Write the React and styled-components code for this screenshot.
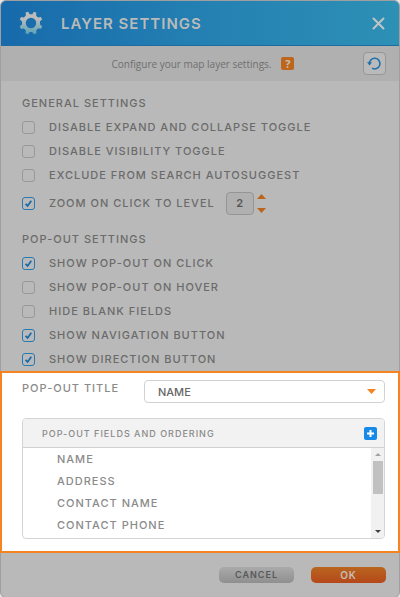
import React, { useState } from 'react'
import styled, { createGlobalStyle } from 'styled-components'

const GlobalStyle = createGlobalStyle`
    * {
        box-sizing: border-box;
    }
    body {
        margin: 0;
        background: #e4e4e4;
        font-family: Inter, "Open Sans", sans-serif;
        font-size: 11px;
        color: #6b6b6b;
    }
    button, input, select {
        font-family: inherit;
        color: inherit;
    }
    h1, h2, p, ul {
        margin: 0;
        padding: 0;
    }
`

const Dialog = styled.main`
    border: 1px solid #9f9f9f;
    border-radius: 6px;
    background: #b9b9b9;
    letter-spacing: 1px;
`
const Header = styled.header`
    display: flex;
    align-items: center;
    height: 45px;
    padding: 0 14px 0 18px;
    border-bottom: 1px solid #1c6c9f;
    border-radius: 5px 5px 0 0;
    background: linear-gradient(90deg, #176aab, #2480b2 50%, #2d90b5);
`
const Title = styled.h1`
    flex: 1;
    margin-left: 18px;
    font-size: 15px;
    font-weight: 600;
    color: #bababa;
`
const CloseButton = styled.button`
    display: flex;
    padding: 0;
    border: 0;
    background: none;
    cursor: pointer;
`
const InfoBar = styled.div`
    display: grid;
    grid-template-columns: 1fr auto 1fr;
    align-items: center;
    height: 35px;
    padding: 0 13px;
    background: #b0b0b0;
`
const InfoText = styled.p`
    grid-column: 2;
    display: flex;
    align-items: center;
    gap: 10px;
    padding-left: 6px;
    font-family: "Open Sans", sans-serif;
    font-size: 10px;
    letter-spacing: normal;
    color: #6f6f6f;
`
const HelpButton = styled.button`
    width: 13px;
    height: 13px;
    padding: 0;
    border: 0;
    border-radius: 2px;
    font-size: 11px;
    font-weight: 700;
    line-height: 13px;
    color: #c9c0b8;
    background: #bd661c;
    cursor: pointer;
`
const ResetButton = styled.button`
    justify-self: end;
    display: flex;
    align-items: center;
    justify-content: center;
    width: 23px;
    height: 23px;
    padding: 0;
    border: 1px solid #969696;
    border-radius: 4px;
    background: #bababa;
    cursor: pointer;
`
const Settings = styled.div`
    display: flex;
    flex-direction: column;
    gap: 8px;
    padding: 10px 14px 0 21px;
`
const SectionTitle = styled.h2`
    font-size: 11px;
    font-weight: 500;
    line-height: 24px;
`
const OptionRow = styled.div`
    display: flex;
    align-items: center;
    height: ${props => props.$tall ? '32px' : '24px'};
`
const OptionLabel = styled.label`
    display: flex;
    align-items: center;
    gap: 14px;
    font-weight: 500;
`
const Checkbox = styled.input`
    appearance: none;
    width: 13px;
    height: 13px;
    margin: 0;
    border: 1px solid #989898;
    border-radius: 3px;
    background: #b9b9b9;

    &:checked {
        border-color: #2779b0;
        background: url("data:image/svg+xml,%3Csvg xmlns='http://www.w3.org/2000/svg' viewBox='0 0 11 11'%3E%3Cpath d='M2.6 5.8 4.6 7.9 8.3 2.8' fill='none' stroke='%231469a8' stroke-width='1.7'/%3E%3C/svg%3E");
    }
`
const LevelInput = styled.input`
    width: 28px;
    height: 23px;
    margin-left: 11px;
    padding: 0;
    border: 1px solid #959595;
    border-radius: 4px;
    font-size: 11px;
    font-weight: 600;
    text-align: center;
    color: #555;
    background: #b0b0b0;
`
const Stepper = styled.div`
    display: flex;
    flex-direction: column;
    gap: 9px;
    margin-left: 3px;
`
const StepButton = styled.button`
    display: flex;
    padding: 0;
    border: 0;
    background: none;
    cursor: pointer;
`
const Highlight = styled.section`
    margin: 0 -1px;
    padding: 7px 13px 12px 20px;
    border: 2px solid #f5841f;
    color: #8a8a8a;
    background: #fff;
`
const FieldRow = styled.div`
    display: grid;
    grid-template-columns: 114px 1fr;
    column-gap: 8px;
    margin-bottom: 15px;
`
const FieldLabel = styled.label`
    font-weight: 500;
    line-height: 17px;
`
const SelectBox = styled.div`
    display: grid;
    align-items: center;

    > * {
        grid-area: 1 / 1;
    }
    > svg {
        justify-self: end;
        margin-right: 9px;
        pointer-events: none;
    }
`
const Select = styled.select`
    appearance: none;
    width: 100%;
    height: 23px;
    padding: 0 24px 0 13px;
    border: 1px solid #d2d2d2;
    border-radius: 4px;
    font-size: 11px;
    font-weight: 500;
    color: #666;
    background: #fff;
`
const FieldPanel = styled.div`
    overflow: hidden;
    border: 1px solid #d4d4d4;
    border-radius: 4px;
`
const PanelHeader = styled.div`
    display: flex;
    align-items: center;
    justify-content: space-between;
    height: 29px;
    padding: 0 7px 0 19px;
    border-bottom: 1px solid #d0d0d0;
    background: #f2f2f2;
`
const PanelTitle = styled.h2`
    font-size: 9px;
    font-weight: 500;
`
const AddButton = styled.button`
    display: flex;
    align-items: center;
    justify-content: center;
    width: 13px;
    height: 13px;
    padding: 0;
    border: 0;
    border-radius: 2px;
    background: #168ae6;
    cursor: pointer;
`
const PanelBody = styled.div`
    display: flex;
`
const FieldList = styled.ul`
    flex: 1;
    padding: 0 0 2px 34px;
    list-style: none;
`
const FieldItem = styled.li`
    height: 22px;
    font-weight: 500;
    line-height: 22px;
`
const ScrollTrack = styled.div`
    display: flex;
    flex-direction: column;
    align-items: center;
    width: 13px;
    padding: 5px 0;
    background: #f1f1f1;
`
const ScrollThumb = styled.div`
    width: 10px;
    height: 33px;
    margin: 5px 0 auto;
    background: #c1c1c1;
`
const Footer = styled.footer`
    display: flex;
    justify-content: flex-end;
    gap: 17px;
    padding: 14px 13px;
`
const FooterButton = styled.button`
    width: 75px;
    height: 16px;
    padding: 0;
    border: 0;
    border-radius: 5px;
    font-size: ${props => props.$primary ? '10px' : '9px'};
    font-weight: 600;
    line-height: 16px;
    letter-spacing: 1px;
    color: ${props => props.$primary ? '#c8bdb4' : '#595959'};
    background: ${props => props.$primary
        ? 'linear-gradient(#b9651f, #b5481a)'
        : 'linear-gradient(#aaa, #8f8f8f)'};
    cursor: pointer;
`

const Triangle = ({ color, up, width = 9, height = 5 }) => (
    <svg width={width} height={height} viewBox="0 0 8 4" preserveAspectRatio="none" aria-hidden="true">
        <path d={up ? 'M0 4 4 0 8 4Z' : 'M0 0H8L4 4Z'} fill={color} />
    </svg>
)

const GearIcon = () => (
    <svg width="24" height="24" viewBox="0 0 24 24" aria-hidden="true">
        <defs>
            <linearGradient id="gear" x1="0" y1="0" x2="0" y2="1">
                <stop offset="0.3" stopColor="#bcbcbc" />
                <stop offset="1" stopColor="#58a3b8" />
            </linearGradient>
        </defs>
        <path
            fill="url(#gear)"
            fillRule="evenodd"
            d="M6.6 1.6 9.2.8 10.7 3.2H13.3L14.8.8 17.4 1.8 17.1 4.6 19 6.4 21.8 5.9 23.2 8.4 21 10.3V13.4L23.2 15.2 22 17.8 19.1 17.5 17.2 19.4 17.5 22.2 14.9 23.2 13.2 20.9H10.7L9.1 23.2 6.5 22.2 6.8 19.4 4.9 17.5 2 17.9.8 15.2 3 13.4V10.4L.8 8.4 2.1 5.9 4.9 6.4 6.9 4.5ZM12 6.8A5.2 5.2 0 1 0 12 17.2 5.2 5.2 0 1 0 12 6.8Z"
        />
    </svg>
)

const CheckOption = ({ label, defaultChecked }) => (
    <OptionLabel>
        <Checkbox type="checkbox" defaultChecked={defaultChecked} />
        {label}
    </OptionLabel>
)

const generalOptions = [
    'DISABLE EXPAND AND COLLAPSE TOGGLE',
    'DISABLE VISIBILITY TOGGLE',
    'EXCLUDE FROM SEARCH AUTOSUGGEST',
]

const popOutOptions = [
    { label: 'SHOW POP-OUT ON CLICK', checked: true },
    { label: 'SHOW POP-OUT ON HOVER', checked: false },
    { label: 'HIDE BLANK FIELDS', checked: false },
    { label: 'SHOW NAVIGATION BUTTON', checked: true },
    { label: 'SHOW DIRECTION BUTTON', checked: true },
]

const fields = ['NAME', 'ADDRESS', 'CONTACT NAME', 'CONTACT PHONE']

const App = () => {
    const [level, setLevel] = useState(2)

    return (
        <Dialog>
            <GlobalStyle />
            <Header>
                <GearIcon />
                <Title>LAYER SETTINGS</Title>
                <CloseButton aria-label="Close">
                    <svg width="13" height="13" viewBox="0 0 13 13" aria-hidden="true">
                        <path d="M1.5 1.5 11.5 11.5M11.5 1.5 1.5 11.5" stroke="#bfc4c6" strokeWidth="2" strokeLinecap="round" />
                    </svg>
                </CloseButton>
            </Header>
            <InfoBar>
                <InfoText>
                    Configure your map layer settings.
                    <HelpButton aria-label="Help">?</HelpButton>
                </InfoText>
                <ResetButton aria-label="Reset">
                    <svg width="15" height="15" viewBox="0 0 15 15" aria-hidden="true">
                        <path d="M2.4 8.2A5.3 5.3 0 1 1 5 12.2" fill="none" stroke="#1f70ab" strokeWidth="1.5" />
                        <path d="M0 6.2H5L2.6 9.6Z" fill="#1f70ab" />
                    </svg>
                </ResetButton>
            </InfoBar>
            <Settings>
                <section>
                    <SectionTitle>GENERAL SETTINGS</SectionTitle>
                    {generalOptions.map(label => (
                        <OptionRow key={label}>
                            <CheckOption label={label} />
                        </OptionRow>
                    ))}
                    <OptionRow $tall>
                        <CheckOption label="ZOOM ON CLICK TO LEVEL" defaultChecked />
                        <LevelInput
                            aria-label="Zoom level"
                            value={level}
                            onChange={e => setLevel(Number(e.target.value) || 0)}
                        />
                        <Stepper>
                            <StepButton aria-label="Increase" onClick={() => setLevel(level + 1)}>
                                <Triangle up color="#bd641a" />
                            </StepButton>
                            <StepButton aria-label="Decrease" onClick={() => setLevel(level - 1)}>
                                <Triangle color="#bd641a" />
                            </StepButton>
                        </Stepper>
                    </OptionRow>
                </section>
                <section>
                    <SectionTitle>POP-OUT SETTINGS</SectionTitle>
                    {popOutOptions.map(option => (
                        <OptionRow key={option.label}>
                            <CheckOption label={option.label} defaultChecked={option.checked} />
                        </OptionRow>
                    ))}
                </section>
            </Settings>
            <Highlight>
                <FieldRow>
                    <FieldLabel htmlFor="popOutTitle">POP-OUT TITLE</FieldLabel>
                    <SelectBox>
                        <Select id="popOutTitle" defaultValue="NAME">
                            {fields.map(field => <option key={field}>{field}</option>)}
                        </Select>
                        <Triangle color="#f5841f" />
                    </SelectBox>
                </FieldRow>
                <FieldPanel>
                    <PanelHeader>
                        <PanelTitle>POP-OUT FIELDS AND ORDERING</PanelTitle>
                        <AddButton aria-label="Add field">
                            <svg width="9" height="9" viewBox="0 0 9 9" aria-hidden="true">
                                <path d="M4.5 1V8M1 4.5H8" stroke="#fff" strokeWidth="2" />
                            </svg>
                        </AddButton>
                    </PanelHeader>
                    <PanelBody>
                        <FieldList>
                            {fields.map(field => <FieldItem key={field}>{field}</FieldItem>)}
                        </FieldList>
                        <ScrollTrack>
                            <Triangle up color="#a3a3a3" width={6} height={3} />
                            <ScrollThumb />
                            <Triangle color="#404040" width={6} height={3} />
                        </ScrollTrack>
                    </PanelBody>
                </FieldPanel>
            </Highlight>
            <Footer>
                <FooterButton>CANCEL</FooterButton>
                <FooterButton $primary>OK</FooterButton>
            </Footer>
        </Dialog>
    )
}

export default App
